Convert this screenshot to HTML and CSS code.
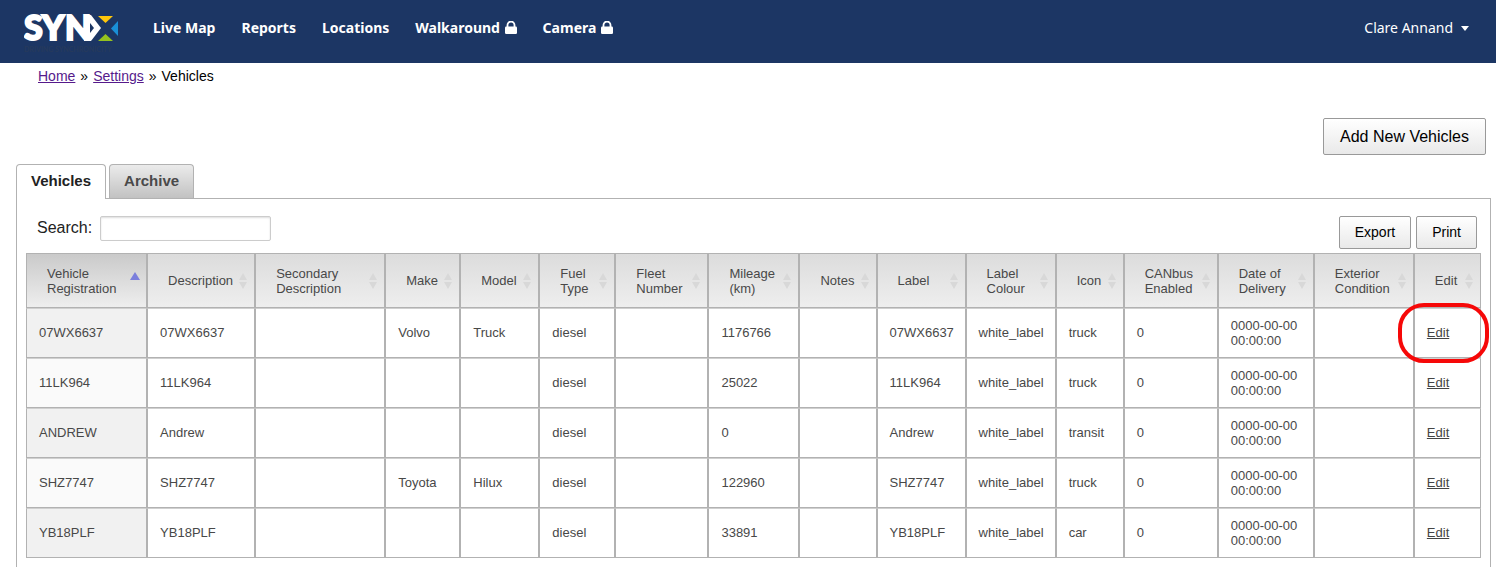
FILE: index.html
```html
<!DOCTYPE html>
<html lang="en">
<head>
<meta charset="utf-8">
<title>Vehicles</title>
<link rel="stylesheet" href="styles.css">
</head>
<body>
<header class="topbar">
  <a class="logo" href="#" aria-label="SYNX">
    <svg width="98" height="63" viewBox="0 0 98 63">
      <text class="logo-word" x="0 18 41" y="40">SYN</text>
      <path fill="#fff" d="M60 15H67L77 28L67 41H60Z"/>
      <path fill="#1c3664" d="M66 23L70 28L66 33Z"/>
      <path fill="#fdc60b" d="M74 16H89L81.500 23Z"/>
      <path fill="#1a8fd6" d="M94 21V36L87 28.500Z"/>
      <path fill="#94c11f" d="M74 41H89L81.500 34Z"/>
      <text class="logo-tag" x="0" y="52">DRIVING SYNCHRONICITY</text>
    </svg>
  </a>
  <nav class="nav">
    <a href="#">Live Map</a>
    <a href="#">Reports</a>
    <a href="#">Locations</a>
    <a href="#">Walkaround <svg class="lock" viewBox="0 0 12 13"><path d="M2.500 6V4a3.500 3.500 0 0 1 7 0v2" fill="none" stroke="#fff" stroke-width="1.800"/><rect y="5.500" width="12" height="7.500" rx="1.200" fill="#fff"/></svg></a>
    <a href="#">Camera <svg class="lock" viewBox="0 0 12 13"><path d="M2.500 6V4a3.500 3.500 0 0 1 7 0v2" fill="none" stroke="#fff" stroke-width="1.800"/><rect y="5.500" width="12" height="7.500" rx="1.200" fill="#fff"/></svg></a>
  </nav>
  <button class="user" type="button">Clare Annand <span class="caret"></span></button>
</header>
<main class="page">
  <nav class="crumbs"><a href="#">Home</a><span>»</span><a href="#">Settings</a><span>»</span><span>Vehicles</span></nav>
  <div class="actions"><button class="btn btn-large" type="button">Add New Vehicles</button></div>
  <div class="tabs" role="tablist">
    <button class="tab tab-active" type="button" role="tab" aria-selected="true">Vehicles</button>
    <button class="tab" type="button" role="tab" aria-selected="false">Archive</button>
  </div>
  <section class="panel">
    <div class="toolbar">
      <label for="search">Search:</label>
      <input id="search" class="search" type="text">
      <div class="tools">
        <button class="btn" type="button">Export</button>
        <button class="btn" type="button">Print</button>
      </div>
    </div>
    <table class="grid">
      <colgroup>
        <col class="c-reg"><col class="c-desc"><col class="c-sec"><col class="c-make"><col class="c-model"><col class="c-fuel"><col class="c-fleet"><col class="c-mile"><col class="c-notes"><col class="c-label"><col class="c-colour"><col class="c-icon"><col class="c-can"><col class="c-date"><col class="c-ext"><col class="c-edit">
      </colgroup>
      <thead>
        <tr><th class="sorted">Vehicle Registration</th><th>Description</th><th>Secondary Description</th><th>Make</th><th>Model</th><th>Fuel Type</th><th>Fleet Number</th><th>Mileage (km)</th><th>Notes</th><th>Label</th><th>Label Colour</th><th>Icon</th><th>CANbus Enabled</th><th>Date of Delivery</th><th>Exterior Condition</th><th>Edit</th></tr>
      </thead>
      <tbody>
        <tr><td>07WX6637</td><td>07WX6637</td><td></td><td>Volvo</td><td>Truck</td><td>diesel</td><td></td><td>1176766</td><td></td><td>07WX6637</td><td>white_label</td><td>truck</td><td>0</td><td>0000-00-00 00:00:00</td><td></td><td class="marked"><a href="#">Edit</a></td></tr>
        <tr><td>11LK964</td><td>11LK964</td><td></td><td></td><td></td><td>diesel</td><td></td><td>25022</td><td></td><td>11LK964</td><td>white_label</td><td>truck</td><td>0</td><td>0000-00-00 00:00:00</td><td></td><td><a href="#">Edit</a></td></tr>
        <tr><td>ANDREW</td><td>Andrew</td><td></td><td></td><td></td><td>diesel</td><td></td><td>0</td><td></td><td>Andrew</td><td>white_label</td><td>transit</td><td>0</td><td>0000-00-00 00:00:00</td><td></td><td><a href="#">Edit</a></td></tr>
        <tr><td>SHZ7747</td><td>SHZ7747</td><td></td><td>Toyota</td><td>Hilux</td><td>diesel</td><td></td><td>122960</td><td></td><td>SHZ7747</td><td>white_label</td><td>truck</td><td>0</td><td>0000-00-00 00:00:00</td><td></td><td><a href="#">Edit</a></td></tr>
        <tr><td>YB18PLF</td><td>YB18PLF</td><td></td><td></td><td></td><td>diesel</td><td></td><td>33891</td><td></td><td>YB18PLF</td><td>white_label</td><td>car</td><td>0</td><td>0000-00-00 00:00:00</td><td></td><td><a href="#">Edit</a></td></tr>
      </tbody>
    </table>
  </section>
</main>
</body>
</html>
```
FILE: styles.css
```css
* { box-sizing: border-box; }
body { display: flex; flex-direction: column; min-height: 100vh; margin: 0; background: #fff; color: #222; font-family: "Liberation Sans", Arial, sans-serif; font-size: 14px; }
button, input { font-family: inherit; }

.topbar { display: flex; align-items: center; height: 63px; padding: 0 24px; background: #1c3664; font-family: "Noto Sans", "Open Sans", sans-serif; }
.logo { display: flex; width: 98px; margin-right: 31px; }
.logo-word { fill: #fff; stroke: #fff; stroke-width: 2px; font: 900 34px Lato, sans-serif; }
.logo-tag { fill: #263a5c; font: 700 7px Lato, sans-serif; }
.nav { display: flex; gap: 26px; flex: 1; padding-bottom: 7px; }
.nav a { color: #fff; font-size: 14px; font-weight: 700; line-height: 20px; text-decoration: none; white-space: nowrap; }
.lock { width: 12px; height: 13px; margin-left: 1px; vertical-align: -1px; }
.user { display: flex; align-items: center; gap: 8px; padding: 0 3px 7px 0; border: 0; background: none; color: #fff; font-family: inherit; font-size: 14px; line-height: 20px; }
.caret { border: 4px solid transparent; border-top: 5px solid #fff; border-bottom: 0; }

.page { display: flex; flex-direction: column; flex: 1; padding: 5px 5px 0 16px; }
.crumbs { display: flex; gap: 5px; padding-left: 22px; line-height: 16px; color: #000; }
.crumbs a { color: #551a8b; }
.actions { display: flex; justify-content: flex-end; padding: 34px 5px 9px 0; }

.btn { height: 33px; padding: 0 15px 2px; border: 1px solid #999; border-radius: 2px; background: linear-gradient(#fff, #e9e9e9); color: #000; font-size: 14px; }
.btn-large { height: 37px; padding: 0 16px; font-size: 16px; }

.tabs { display: flex; gap: 3px; }
.tab { height: 34px; padding: 0 14px 2px; border: 1px solid #b2b2b2; border-bottom: 0; border-radius: 4px 4px 0 0; background: linear-gradient(#ebebeb, #c2c2c2); color: #4a4a4a; font-size: 15px; font-weight: 700; }
.tab-active { height: 35px; margin-bottom: -1px; padding-bottom: 3px; background: #fff; color: #222; z-index: 1; }

.panel { flex: 1; padding: 17px 9px 8px; border: 1px solid #b2b2b2; border-bottom: 0; }
.toolbar { display: flex; align-items: flex-start; gap: 8px; padding: 0 4px 0 11px; }
.toolbar label { font-size: 16px; line-height: 24px; }
.search { width: 171px; height: 25px; border: 1px solid #ccc; border-radius: 2px; box-shadow: inset 0 1px 2px #ddd; }
.tools { display: flex; gap: 5px; margin: 0 0 4px auto; }

.grid { width: 100%; table-layout: fixed; border-collapse: separate; border-spacing: 0; color: #484848; font-size: 13px; line-height: 15px; }
.grid th, .grid td { border: 1px solid #b2b2b2; border-top-color: #d0d0d0; text-align: left; vertical-align: middle; }
.grid th { position: relative; height: 55px; padding: 0 18px 0 20px; border-top-color: #b2b2b2; background: linear-gradient(#dcdcdc, #eee); font-weight: 400; }
.grid td { height: 50px; padding: 0 10px 1px 12px; }
.grid th::before, .grid th::after { content: ""; position: absolute; right: 7px; border: 4px solid transparent; }
.grid th::before { top: 19px; border-top: 0; border-bottom: 7px solid #d8d8d8; }
.grid th::after { top: 28px; border-bottom: 0; border-top: 7px solid #d8d8d8; }
.grid .sorted { background: linear-gradient(#cacaca, #eee); }
.grid .sorted::before { right: 6px; top: 18px; border: 5px solid transparent; border-top: 0; border-bottom: 8px solid #7b7fdc; }
.grid .sorted::after { display: none; }
.grid td:first-child { background: #fafafa; }
.grid tr:nth-child(odd) td:first-child { background: #f1f1f1; }
.grid a { color: #444; }
.marked { position: relative; }
.marked::after { content: ""; position: absolute; z-index: 2; inset: -6px -9px -6px -17px; border: 4px solid #f60808; border-radius: 26px; pointer-events: none; }

.c-reg { width: 121px; } .c-desc { width: 108px; } .c-sec { width: 130px; } .c-make { width: 75px; }
.c-model { width: 79px; } .c-fuel { width: 76px; } .c-fleet { width: 93px; } .c-mile { width: 91px; }
.c-notes { width: 77px; } .c-label { width: 89px; } .c-colour { width: 90px; } .c-icon { width: 68px; }
.c-can { width: 94px; } .c-date { width: 96px; } .c-ext { width: 100px; } .c-edit { width: 67px; }
```
